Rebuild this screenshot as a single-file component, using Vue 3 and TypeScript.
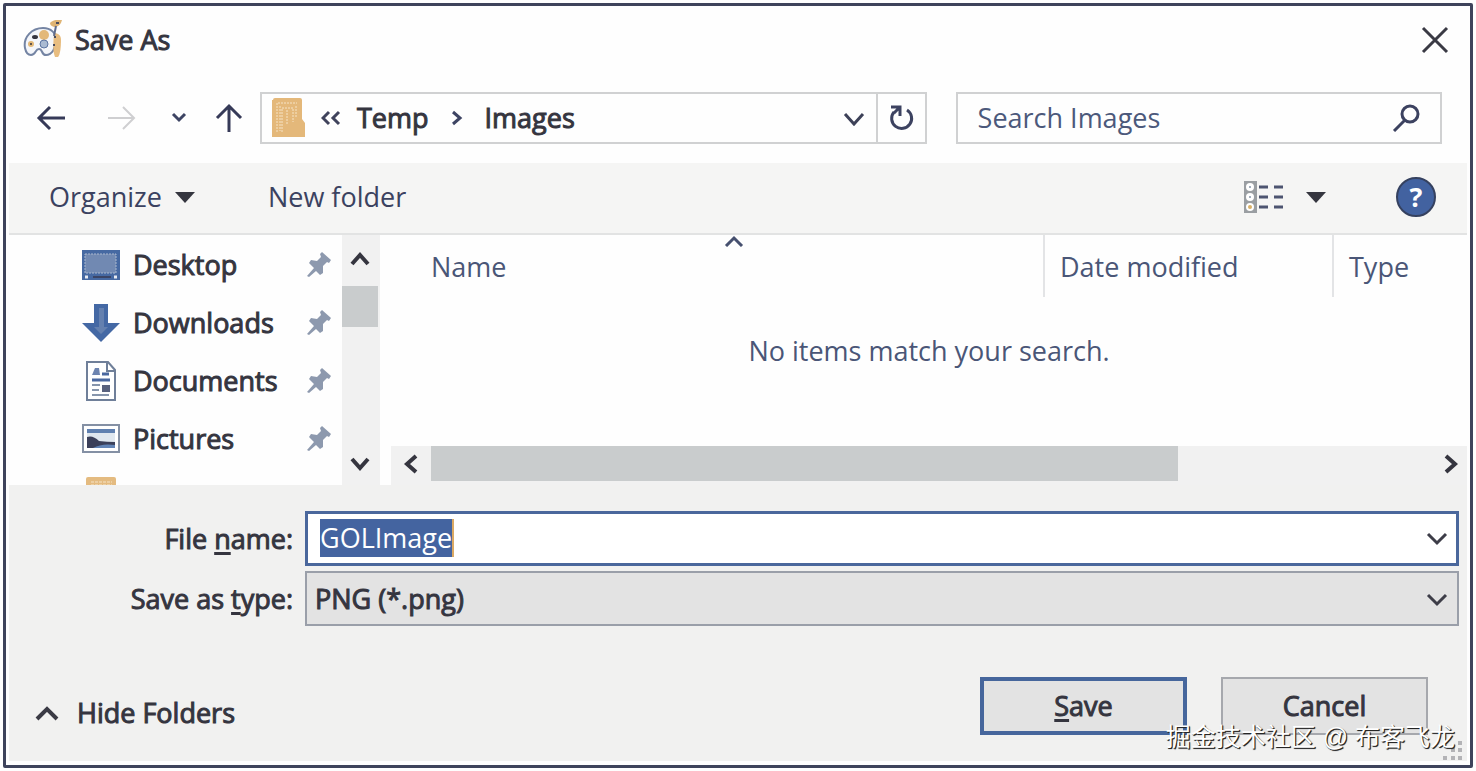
<script setup lang="ts">
import { ref } from 'vue'

interface Place {
  name: string
  icon: 'desktop' | 'downloads' | 'documents' | 'pictures'
}

const places: Place[] = [
  { name: 'Desktop', icon: 'desktop' },
  { name: 'Downloads', icon: 'downloads' },
  { name: 'Documents', icon: 'documents' },
  { name: 'Pictures', icon: 'pictures' },
]

const fileName = ref('GOLImage')
const fileType = ref('png')
const query = ref('')
</script>

<template>
  <main class="screen">
    <section class="dialog" aria-label="Save As">
      <header class="title-bar">
        <svg class="app-icon" width="40" height="40" viewBox="0 0 40 40" aria-hidden="true">
          <path d="M2 28C0 17 9 8 20 8c8 0 13 5 13 12 0 8-4 15-10 15-5 0-3-6-7-6-4 0-3 6-8 6-3 0-5-2-6-7z" fill="#f4f6fa" stroke="#7484a3" stroke-width="2" />
          <circle cx="21" cy="15" r="5" fill="#e3b878" />
          <ellipse cx="12" cy="17" rx="3" ry="2" fill="#34343e" />
          <circle cx="8" cy="24" r="3" fill="#e3b878" /><circle cx="8" cy="24" r="1" fill="#34343e" />
          <circle cx="21" cy="24" r="4" fill="#a9bad2" stroke="#5c75a3" />
          <path d="M31 13c4 0 7 2 7 7 0 8-1 15-3 17h-3c-2-5-2-11-1-24z" fill="#e8bd80" />
          <path d="M27 3c2-3 9-4 12-3-1 4-3 6-6 7-4 0-6-2-6-4z" fill="#dfb474" />
          <path d="M33 6l-2 10" stroke="#5f6c8d" stroke-width="2" />
          <path d="M33 3h3M32 16v2M31 24v2" stroke="#4a4c5c" stroke-width="2" />
        </svg>
        <h1>Save As</h1>
        <button class="plain close" type="button" aria-label="Close">
          <svg width="28" height="28" viewBox="0 0 28 28"><path d="M2 2l24 24M26 2L2 26" stroke="#3a3a44" stroke-width="3" /></svg>
        </button>
      </header>

      <nav class="nav-bar" aria-label="Location">
        <div class="history">
          <button class="plain" type="button" aria-label="Back">
            <svg width="32" height="28" viewBox="0 0 32 28"><path d="M30 14H4M15 3L4 14l11 11" fill="none" stroke="#363a58" stroke-width="3" /></svg>
          </button>
          <button class="plain forward" type="button" aria-label="Forward" disabled>
            <svg width="32" height="28" viewBox="0 0 32 28"><path d="M2 14h26M17 3l11 11-11 11" fill="none" stroke="#cfcfd1" stroke-width="2" /></svg>
          </button>
          <button class="plain recent" type="button" aria-label="Recent locations">
            <svg width="16" height="12" viewBox="0 0 16 12"><path d="M2 2l6 6 6-6" fill="none" stroke="#3d4463" stroke-width="3" /></svg>
          </button>
          <button class="plain up" type="button" aria-label="Up">
            <svg width="28" height="32" viewBox="0 0 28 32"><path d="M14 30V4M2 16L14 4l12 12" fill="none" stroke="#363a58" stroke-width="3" /></svg>
          </button>
        </div>
        <div class="address">
          <svg width="33" height="40" viewBox="0 0 33 40" aria-hidden="true">
            <path d="M1 2Q1 0 3 0h25q2 0 2 2v19l3 4v14H0V2z" fill="#e4b87a" />
            <path d="M5 34V5h20M10 34V10h11v14M15 12v14M8 8v25M24 8v12" fill="none" stroke="#f6e3c5" stroke-width="1" stroke-dasharray="2 1" />
          </svg>
          <button class="plain" type="button" aria-label="Parent folders">
            <svg width="20" height="16" viewBox="0 0 20 16"><path d="M8 2L2 8l6 6M18 2l-6 6 6 6" fill="none" stroke="#40435c" stroke-width="3" /></svg>
          </button>
          <button class="plain crumb" type="button">Temp</button>
          <svg class="separator" width="12" height="16" viewBox="0 0 12 16" aria-hidden="true"><path d="M2 2l7 6-7 6" fill="none" stroke="#3d4463" stroke-width="3" /></svg>
          <button class="plain crumb" type="button">Images</button>
          <button class="plain expand" type="button" aria-label="Previous locations">
            <svg width="22" height="16" viewBox="0 0 22 16"><path d="M2 4l9 10 9-10" fill="none" stroke="#3d4158" stroke-width="3" /></svg>
          </button>
        </div>
        <button class="plain refresh" type="button" aria-label="Refresh">
          <svg width="28" height="28" viewBox="0 0 28 28">
            <path d="M20 6a10 10 0 1 1-13 2" fill="none" stroke="#3c4260" stroke-width="3" />
            <path d="M4 3h9v9M13 3L7 9" fill="none" stroke="#3c4260" stroke-width="3" />
          </svg>
        </button>
        <label class="search">
          <input v-model="query" type="search" placeholder="Search Images" aria-label="Search Images" />
          <svg width="28" height="28" viewBox="0 0 28 28" aria-hidden="true">
            <circle cx="18" cy="10" r="8" fill="none" stroke="#3c4260" stroke-width="3" /><path d="M13 16L2 27" stroke="#3c4260" stroke-width="3" />
          </svg>
        </label>
      </nav>

      <div class="toolbar">
        <button class="plain organize" type="button">
          Organize
          <svg width="20" height="12" viewBox="0 0 20 12"><path d="M0 1h20L10 12z" fill="#35363f" /></svg>
        </button>
        <button class="plain" type="button">New folder</button>
        <button class="plain view" type="button" aria-label="Change view">
          <svg width="40" height="32" viewBox="0 0 40 32">
            <path d="M0 0h13v32H0z" fill="#9a9ea2" />
            <circle cx="6" cy="6" r="4" fill="#fff" /><circle cx="6" cy="16" r="4" fill="#fff" /><circle cx="6" cy="26" r="4" fill="#fff" />
            <circle cx="6" cy="6" r="1" fill="#8494a8" /><circle cx="6" cy="16" r="1" fill="#8494a8" /><circle cx="6" cy="26" r="2" fill="#d9b168" />
            <path d="M15 6h9M30 6h9M15 16h9M30 16h9M15 26h9M30 26h9" stroke="#4d5470" stroke-width="3" />
          </svg>
          <svg width="20" height="12" viewBox="0 0 20 12"><path d="M0 1h20L10 12z" fill="#35363f" /></svg>
        </button>
        <button class="help" type="button" aria-label="Help">?</button>
      </div>

      <div class="browser">
        <aside class="sidebar">
          <ul>
            <li v-for="place in places" :key="place.name">
              <a href="#">
                <svg v-if="place.icon === 'desktop'" width="40" height="40" viewBox="0 0 40 40" aria-hidden="true">
                  <path d="M1 5h38v30H1z" fill="#4669a2" /><path d="M4 9h31v19H4z" fill="#7189b2" stroke="#aab8ce" stroke-dasharray="2 1" />
                  <path d="M4 32h3M33 32h3" stroke="#e6eaf1" stroke-width="3" /><path d="M12 32h18" stroke="#3b4566" stroke-width="2" />
                </svg>
                <svg v-else-if="place.icon === 'downloads'" width="40" height="40" viewBox="0 0 40 40" aria-hidden="true">
                  <path d="M13 1h14v19h12L20 39 1 20h12z" fill="#4468a4" /><path d="M18 5h5v19h4l-7 7-7-7h5z" fill="#6480af" />
                </svg>
                <svg v-else-if="place.icon === 'documents'" width="40" height="40" viewBox="0 0 40 40" aria-hidden="true">
                  <path d="M6 1h21l7 8v30H6z" fill="#fff" stroke="#6f7f99" stroke-width="2" /><path d="M26 1v9h8" fill="none" stroke="#6f7f99" stroke-width="2" />
                  <path d="M11 14l3-7h4l1 7z" fill="#6d84b0" /><path d="M21 13h7M11 19h18" stroke="#4a68a0" stroke-width="3" />
                  <path d="M11 24h8M11 29h7M11 34h17" stroke="#8695ac" stroke-width="2" /><path d="M21 24h8v7h-8z" fill="#59627e" />
                </svg>
                <svg v-else width="40" height="40" viewBox="0 0 40 40" aria-hidden="true">
                  <path d="M2 6h36v27H2z" fill="#fff" stroke="#8490a4" stroke-width="2" /><path d="M6 10h28v19H6z" fill="#dfe7ef" />
                  <path d="M6 10h28v4H6z" fill="#5f80b0" /><path d="M6 18q6-2 12 4 8 1 16 1v6H6z" fill="#3b405a" /><path d="M12 29q9-5 22-3v3z" fill="#6284b6" />
                </svg>
                <span>{{ place.name }}</span>
              </a>
              <svg class="pin" width="26" height="26" viewBox="0 0 26 26" aria-hidden="true">
                <path d="M16 0l9 8-2 3-2-1-4 4v7l-3 2-4-4-7 6-2-1 7-8-5-5 2-3 6 1 4-4-1-3z" fill="#8d99ae" />
              </svg>
            </li>
            <li class="partial">
              <svg width="40" height="40" viewBox="0 0 40 40" aria-hidden="true">
                <path d="M5 2q0-2 2-2h26q2 0 2 2v38H5z" fill="#e4bb80" /><path d="M10 5h21M10 8h21" stroke="#f6e4c8" stroke-dasharray="3 1" />
              </svg>
            </li>
          </ul>
          <div class="scroll-v">
            <button class="plain" type="button" aria-label="Scroll up">
              <svg width="20" height="16" viewBox="0 0 20 16"><path d="M2 13l8-9 8 9" fill="none" stroke="#35353f" stroke-width="4" /></svg>
            </button>
            <div class="thumb-v"></div>
            <button class="plain down" type="button" aria-label="Scroll down">
              <svg width="20" height="16" viewBox="0 0 20 16"><path d="M2 3l8 9 8-9" fill="none" stroke="#35353f" stroke-width="4" /></svg>
            </button>
          </div>
        </aside>

        <div class="files">
          <table>
            <colgroup><col /><col class="col-date" /><col class="col-type" /></colgroup>
            <thead>
              <tr>
                <th class="name">
                  <svg class="sort" width="20" height="12" viewBox="0 0 20 12" aria-hidden="true"><path d="M2 11l8-8 8 8" fill="none" stroke="#46506f" stroke-width="3" /></svg>
                  Name
                </th>
                <th>Date modified</th>
                <th>Type</th>
              </tr>
            </thead>
            <tbody>
              <tr><td colspan="3">No items match your search.</td></tr>
            </tbody>
          </table>
          <div class="scroll-h">
            <button class="plain" type="button" aria-label="Scroll left">
              <svg width="16" height="20" viewBox="0 0 16 20"><path d="M13 2l-9 8 9 8" fill="none" stroke="#35353f" stroke-width="4" /></svg>
            </button>
            <div class="track-h"><div class="thumb-h"></div></div>
            <button class="plain" type="button" aria-label="Scroll right">
              <svg width="16" height="20" viewBox="0 0 16 20"><path d="M3 2l9 8-9 8" fill="none" stroke="#35353f" stroke-width="4" /></svg>
            </button>
          </div>
        </div>
      </div>

      <form class="form" @submit.prevent>
        <div class="fields">
          <label for="file-name">File <u>n</u>ame:</label>
          <div class="field active">
            <input id="file-name" v-model="fileName" type="text" spellcheck="false" />
            <button class="plain" type="button" aria-label="Previous file names">
              <svg width="22" height="16" viewBox="0 0 22 16"><path d="M2 4l9 9 9-9" fill="none" stroke="#3d3d48" stroke-width="3" /></svg>
            </button>
          </div>
          <label for="file-type">Save as <u>t</u>ype:</label>
          <div class="field">
            <select id="file-type" v-model="fileType">
              <option value="png">PNG (*.png)</option>
            </select>
            <svg class="arrow" width="22" height="16" viewBox="0 0 22 16" aria-hidden="true"><path d="M2 4l9 9 9-9" fill="none" stroke="#3d3d48" stroke-width="3" /></svg>
          </div>
        </div>
        <div class="actions">
          <button class="plain hide" type="button">
            <svg width="24" height="16" viewBox="0 0 24 16"><path d="M2 14l10-10 10 10" fill="none" stroke="#3a3a44" stroke-width="4" /></svg>
            Hide Folders
          </button>
          <button class="push save" type="submit"><span><u>S</u>ave</span></button>
          <button class="push" type="button">Cancel</button>
        </div>
      </form>
      <svg class="grip" width="20" height="20" viewBox="0 0 20 20" aria-hidden="true">
        <path d="M15 0h4v4h-4zM8 7h4v4H8zM15 7h4v4h-4zM0 15h4v4H0zM8 15h4v4H8zM15 15h4v4h-4z" fill="#b3b3b6" />
      </svg>
      <p class="watermark">掘金技术社区 @ 布客飞龙</p>
    </section>
  </main>
</template>

<style>
body {
  margin: 0;
  background: #fefefe;
}
</style>

<style scoped>
* {
  box-sizing: border-box;
}

.screen {
  padding: 3px;
  font-family: "Open Sans", "Noto Sans", sans-serif;
  font-size: 27px;
  line-height: 36px;
  color: #35353f;
}

.dialog {
  position: relative;
  border: 3px solid #3e435b;
  border-radius: 2px;
  background: #fefefe;
  padding: 0 3px 4px;
}

svg {
  display: block;
  flex: none;
}

button,
input,
select {
  font: inherit;
  color: inherit;
}

.plain {
  display: flex;
  align-items: center;
  justify-content: center;
  padding: 0;
  border: 0;
  background: none;
}

u {
  text-decoration-thickness: 3px;
  text-underline-offset: 3px;
}

h1,
.crumb,
ul,
.fields,
.hide,
.push {
  -webkit-text-stroke: 1px currentColor;
}

.title-bar {
  display: flex;
  align-items: center;
  gap: 12px;
  height: 70px;
  padding: 0 18px 2px 14px;
}

h1 {
  margin: 0;
  font-size: 27px;
  font-weight: 400;
}

.close {
  margin-left: auto;
}

.nav-bar {
  display: flex;
  align-items: center;
  height: 87px;
  padding: 0 25px 3px 26px;
}

.history {
  display: flex;
  align-items: center;
  width: 208px;
  margin-right: 17px;
}

.forward {
  margin-left: 39px;
}

.recent {
  margin-left: 33px;
}

.up {
  margin-left: auto;
}

.address {
  display: flex;
  align-items: center;
  flex: 592 1 0;
  height: 52px;
  padding: 0 11px 0 10px;
  border: 2px solid #d0d1d2;
  gap: 16px;
}

.separator {
  margin: 0 6px;
}

.expand {
  margin-left: auto;
}

.refresh {
  width: 49px;
  height: 52px;
  border: 2px solid #d0d1d2;
  border-left: 0;
}

.search {
  display: flex;
  align-items: center;
  flex: 442 1 0;
  height: 52px;
  margin-left: 29px;
  padding: 0 20px;
  border: 2px solid #d0d1d2;
}

.search input {
  flex: 1;
  min-width: 0;
  padding: 0;
  border: 0;
  outline: 0;
  background: none;
}

.search input::placeholder {
  color: #4c597b;
  opacity: 1;
}

.toolbar {
  display: flex;
  align-items: center;
  height: 72px;
  padding: 0 31px 2px 40px;
  border-bottom: 2px solid #e2e3e3;
  background: #f5f5f4;
  color: #3b4260;
}

.organize {
  gap: 13px;
  margin-right: 73px;
}

.view {
  gap: 22px;
  margin-left: auto;
}

.help {
  width: 40px;
  height: 40px;
  margin-left: 70px;
  padding: 0;
  border: 2px solid #35415f;
  border-radius: 50%;
  background: #4262a0;
  color: #fff;
  font-weight: 700;
  line-height: 34px;
}

.browser {
  display: flex;
  height: 250px;
}

.sidebar {
  display: flex;
  width: 371px;
}

ul {
  flex: 1;
  height: 250px;
  margin: 0;
  padding: 1px 10px 0 72px;
  overflow: hidden;
  list-style: none;
}

li {
  display: flex;
  align-items: center;
  justify-content: space-between;
  height: 58px;
}

li.partial {
  align-items: flex-start;
  padding-top: 9px;
}

li a {
  display: flex;
  align-items: center;
  gap: 12px;
  color: inherit;
  text-decoration: none;
}

.scroll-v {
  display: flex;
  flex-direction: column;
  width: 38px;
  background: #f1f1f1;
}

.scroll-v .plain {
  width: 36px;
  height: 48px;
}

.scroll-v .down {
  height: 42px;
  margin-top: auto;
}

.thumb-v {
  width: 36px;
  height: 41px;
  margin-top: 3px;
  background: #c9cccd;
}

.files {
  display: flex;
  flex: 1;
  flex-direction: column;
  min-width: 0;
  padding-left: 11px;
}

table {
  width: 100%;
  border-spacing: 0;
  table-layout: fixed;
  color: #4a5677;
}

.col-date {
  width: 289px;
}

.col-type {
  width: 135px;
}

th {
  position: relative;
  height: 62px;
  padding: 2px 0 0 15px;
  border-left: 2px solid #e3e4e6;
  font-weight: 400;
  text-align: left;
}

th.name {
  padding-left: 40px;
  border-left: 0;
}

.sort {
  position: absolute;
  top: 0;
  left: 51%;
}

td {
  height: 108px;
  padding: 0;
  text-align: center;
}

.scroll-h {
  display: flex;
  height: 39px;
  margin-top: auto;
  padding-right: 5px;
  background: #f1f1f1;
}

.scroll-h .plain {
  width: 40px;
  height: 36px;
}

.scroll-h .plain:last-child {
  width: 22px;
}

.track-h {
  flex: 1;
}

.thumb-h {
  width: 74%;
  height: 35px;
  background: #c9cccd;
}

.form {
  padding: 26px 8px 26px 16px;
  background: #f1f1f0;
}

.fields {
  display: grid;
  grid-template-columns: 268px 1fr;
  align-items: center;
  gap: 5px 12px;
  text-align: right;
}

.field {
  display: flex;
  position: relative;
  align-items: center;
  justify-content: space-between;
  height: 55px;
  border: 2px solid #9a9fa9;
  background: #e3e3e3;
}

.field.active {
  padding: 0 8px 2px 12px;
  border: 3px solid #4a679c;
  background: #fff;
}

.field input {
  field-sizing: content;
  height: 38px;
  padding: 0;
  border: 0;
  border-right: 2px solid #dba963;
  outline: 0;
  background: #4464a0;
  color: #fff;
  -webkit-text-stroke: 0;
}

.field select {
  width: 100%;
  height: 100%;
  padding: 0 8px;
  border: 0;
  outline: 0;
  background: none;
  appearance: none;
}

.arrow {
  position: absolute;
  right: 9px;
  pointer-events: none;
}

.actions {
  display: flex;
  align-items: center;
  gap: 34px;
  margin-top: 51px;
  padding-right: 31px;
}

.hide {
  gap: 18px;
  margin: 14px auto 0 10px;
}

.push {
  width: 207px;
  height: 58px;
  padding: 0;
  border: 2px solid #a6a8ad;
  background: #e3e3e3;
}

.save {
  border: 4px solid #46669c;
}

.grip {
  position: absolute;
  right: 7px;
  bottom: 4px;
}

.watermark {
  position: absolute;
  right: 15px;
  bottom: 12px;
  margin: 0;
  color: #fff;
  font-family: "Liberation Sans", "Noto Sans CJK SC", sans-serif;
  font-size: 25px;
  line-height: 32px;
  text-shadow: 1px 1px 1px #222, 1px 1px 0 #444;
}
</style>
